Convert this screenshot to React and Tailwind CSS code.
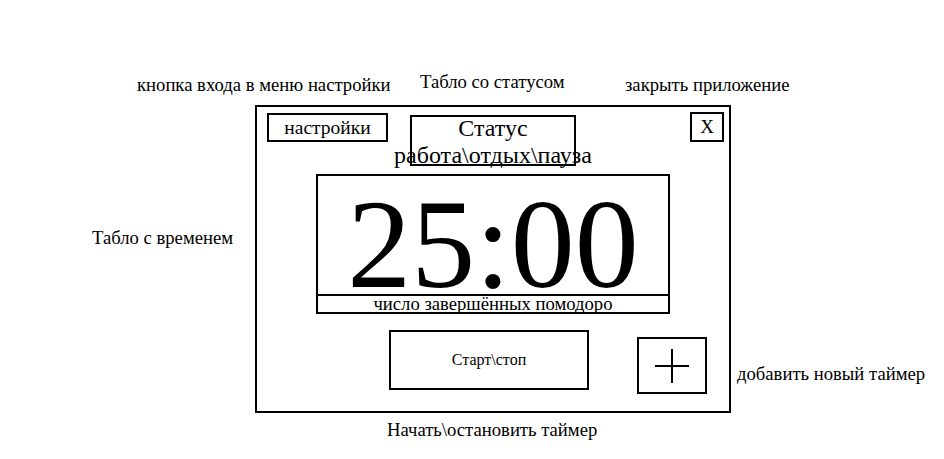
import React from 'react';

const Note = ({ className, children }) => (
    <div className={`absolute whitespace-nowrap text-[18.67px] leading-[20px] ${className}`}>{children}</div>
);

const App = () => {
    return (
        <div className="relative w-[944px] h-[459px] bg-white text-black [font-family:'Liberation_Serif',serif] overflow-hidden">
            {/* diagram labels */}
            <Note className="left-[137px] top-[75px]">кнопка входа в меню настройки</Note>
            <Note className="left-[420px] top-[72px]">Табло со статусом</Note>
            <Note className="left-[625px] top-[75px]">закрыть приложение</Note>
            <Note className="left-[92px] top-[228px]">Табло с временем</Note>
            <Note className="left-[737px] top-[364px]">добавить новый таймер</Note>
            <Note className="left-[387px] top-[420px]">Начать\остановить таймер</Note>

            {/* app window */}
            <div className="ml-[255px] mt-[105px] w-[476px] h-[308px] border-2 border-black flex flex-col">
                <div className="grid grid-cols-[1fr_166px_1fr] items-start">
                    <div className="ml-[10px] mt-[6px] w-[121px] h-[29px] border-2 border-black flex items-center justify-center text-[19.5px] leading-[22px]">
                        настройки
                    </div>
                    <div className="mt-[8px] h-[51px] border-2 border-black flex flex-col items-center whitespace-nowrap">
                        <div className="text-[24px] leading-[22px]">Статус</div>
                        <div className="text-[24px] leading-[32px]">работа\отдых\пауза</div>
                    </div>
                    <div className="justify-self-end mr-[5px] mt-[5px] w-[34px] h-[30px] border-2 border-black flex items-center justify-center text-[19px] leading-[22px]">
                        X
                    </div>
                </div>

                <div className="mx-auto mt-[8px] w-[354px] h-[140px] border-2 border-black flex flex-col">
                    <div className="h-[118px] pt-[18px] text-center text-[128px] leading-[100px] whitespace-nowrap">25:00</div>
                    <div className="flex-1 border-t-2 border-black text-center text-[18.67px] leading-[15px] whitespace-nowrap">
                        число завершённых помодоро
                    </div>
                </div>

                <div className="flex items-start mt-[16px]">
                    <div className="ml-[132px] w-[200px] h-[60px] border-2 border-black flex items-center justify-center text-[16px]">
                        Старт\стоп
                    </div>
                    <div className="ml-[48px] mt-[7px] w-[70px] h-[57px] border-2 border-black flex items-center justify-center">
                        <svg width="36" height="36" viewBox="0 0 36 36">
                            <path d="M18 1v34M1 18h34" stroke="black" strokeWidth="2" />
                        </svg>
                    </div>
                </div>
            </div>
        </div>
    );
};

export default App;
